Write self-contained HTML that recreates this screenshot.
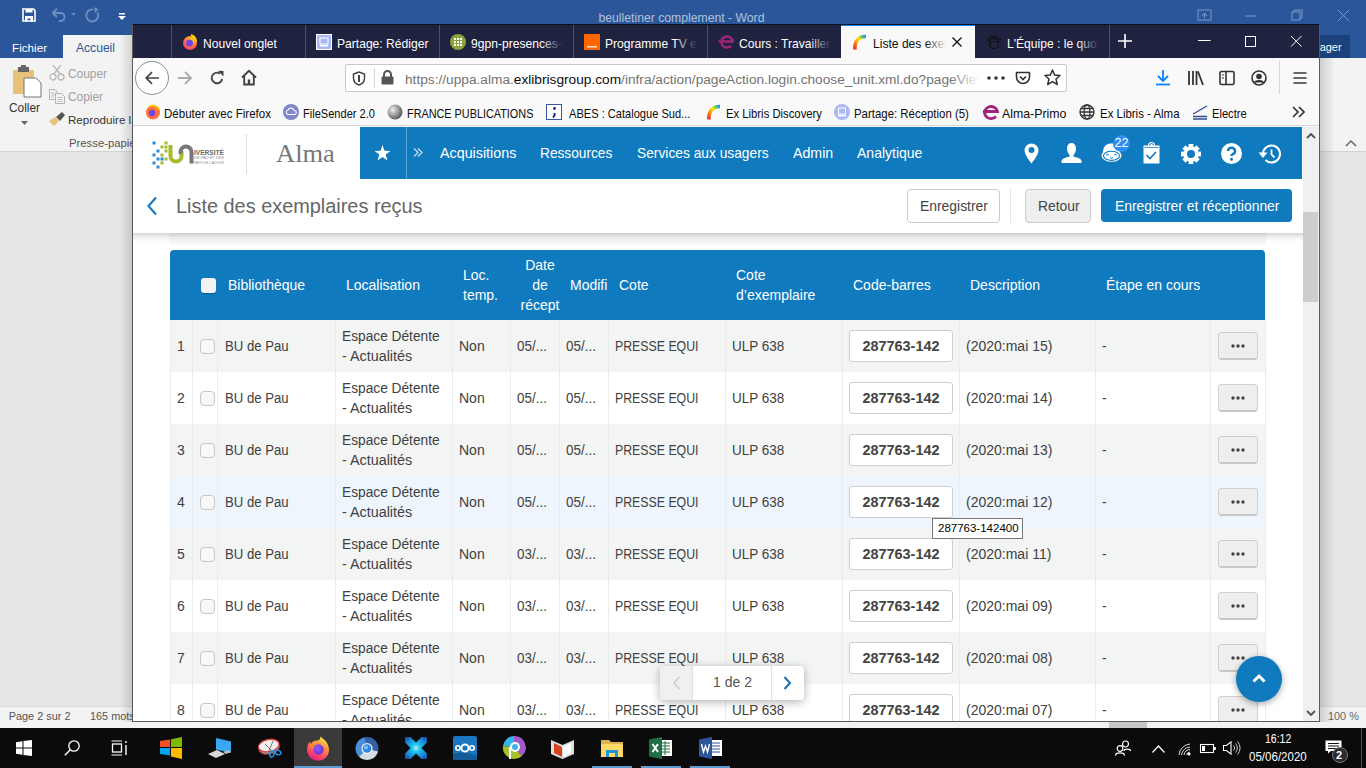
<!DOCTYPE html><html><head><meta charset="utf-8"><title>Alma</title><style>
*{margin:0;padding:0;box-sizing:border-box}
html,body{width:1366px;height:768px;overflow:hidden;background:#e6e6e6;font-family:"Liberation Sans",sans-serif;position:relative}
.a{position:absolute}
.t{position:absolute;white-space:nowrap;line-height:1}
svg{position:absolute;overflow:visible}
</style></head><body>
<div class="a" style="left:0;top:0;width:1366px;height:58px;background:#2b579a"></div>
<div class="t" style="left:598.5px;top:12px;font-size:12.21px;color:#afc0dc">beulletiner complement - Word</div>
<svg style="left:22px;top:8px" width="14" height="14" viewBox="0 0 14 14"><path d="M1 1H11.5L13 2.5V13H1Z" fill="none" stroke="#fff" stroke-width="1.6"/><rect x="3.5" y="1" width="7" height="3.5" fill="#fff"/><path d="M3 8H11V13.5H8.5V10.5H5.5V13.5H3Z" fill="#fff"/></svg>
<svg style="left:51px;top:8px" width="50" height="14" viewBox="0 0 50 14"><path d="M1.5 5L6 1M1.5 5L6 9M1.5 5H9.5A4 4 0 0 1 9.5 13H8" fill="none" stroke="#6f8fc0" stroke-width="1.8"/><path d="M20 5h5l-2.5 2.5z" fill="#6f8fc0"/><path d="M46.5 4.5A6 6 0 1 1 42 1.5" fill="none" stroke="#6f8fc0" stroke-width="1.8"/><path d="M43 -1L47.5 1.5L44 5Z" fill="#6f8fc0"/></svg>
<svg style="left:118px;top:13px" width="8" height="8" viewBox="0 0 8 8"><rect x="1" y="0" width="6" height="1.5" fill="#fff"/><path d="M0 3h8l-4 4z" fill="#fff"/></svg>
<svg style="left:1197px;top:9px" width="155" height="14" viewBox="0 0 155 14"><rect x="1" y="1" width="13" height="10" fill="none" stroke="#7d97c4"/><path d="M5 7 l2.5-3 l2.5 3 M7.5 4v5" fill="none" stroke="#7d97c4"/><path d="M48 7h11" stroke="#7d97c4"/><rect x="95" y="3" width="8" height="8" fill="none" stroke="#7d97c4"/><path d="M97 3v-2h8v8h-2" fill="none" stroke="#7d97c4"/><path d="M141 1l11 11M152 1l-11 11" stroke="#7d97c4"/></svg>
<div class="t" style="left:12px;top:42px;font-size:11.7px;color:#fff">Fichier</div>
<div class="a" style="left:63px;top:35px;width:80px;height:23px;background:#f3f3f3"></div>
<div class="t" style="left:76px;top:42px;font-size:12.1px;color:#2b579a">Accueil</div>
<div class="a" style="left:1290px;top:35px;width:60px;height:23px;background:#1b427b"></div>
<div class="t" style="left:1299.5px;top:42px;font-size:10.99px;color:#fff">Partager</div>
<div class="a" style="left:0;top:58px;width:1366px;height:94px;background:#f3f3f3;border-bottom:1px solid #d4d4d4"></div>
<svg style="left:13px;top:66px" width="30" height="32" viewBox="0 0 30 32"><rect x="0" y="4" width="21" height="24" fill="#e9c27a"/><rect x="5" y="1" width="11" height="5" fill="#666"/><rect x="8" y="-1" width="5" height="3" fill="#666"/><path d="M11 12h12l5 5v14H11z" fill="#fff" stroke="#777"/></svg>
<div class="t" style="left:9px;top:103px;font-size:11.9px;color:#333">Coller</div>
<svg style="left:21px;top:121px" width="7" height="4" viewBox="0 0 7 4"><path d="M0 0h7l-3.5 4z" fill="#666"/></svg>
<svg style="left:49px;top:65px" width="17" height="16" viewBox="0 0 17 16"><circle cx="4" cy="12" r="3" fill="none" stroke="#bbb" stroke-width="1.3"/><circle cx="12" cy="12" r="3" fill="none" stroke="#bbb" stroke-width="1.3"/><path d="M5 9L12 0M11 9L4 0" stroke="#bbb" stroke-width="1.3"/></svg>
<div class="t" style="left:68px;top:69px;font-size:11.9px;color:#a0a0a0">Couper</div>
<svg style="left:49px;top:89px" width="16" height="15" viewBox="0 0 16 15"><path d="M0.5 0.5H6L8 2.5V10.5H0.5Z" fill="#f3f3f3" stroke="#b5b5b5"/><path d="M2 4H6M2 6H6M2 8H5" stroke="#b5b5b5" stroke-width="0.8"/><path d="M6.5 4.5H12.5L15.5 7.5V14.5H6.5Z" fill="#f3f3f3" stroke="#b5b5b5"/><path d="M8.5 8.5H13.5M8.5 10.5H13.5M8.5 12.5H13.5" stroke="#b5b5b5" stroke-width="0.8"/></svg>
<div class="t" style="left:68px;top:92px;font-size:11.9px;color:#a0a0a0">Copier</div>
<svg style="left:49px;top:111px" width="17" height="16" viewBox="0 0 17 16"><path d="M0 10l6-4 4 4-5 5z" fill="#e9c27a"/><path d="M7 6l6-5 3 3-5 6z" fill="#555"/></svg>
<div class="t" style="left:68px;top:114px;font-size:11.6px;color:#333">Reproduire la</div>
<div class="t" style="left:69px;top:138px;font-size:11.3px;color:#555">Presse-papiers</div>
<div class="a" style="left:0;top:706px;width:1366px;height:22px;background:#f3f3f3;border-top:1px solid #dadada"></div>
<div class="t" style="left:8.7px;top:711px;font-size:10.9px;color:#555">Page 2 sur 2</div>
<div class="t" style="left:90px;top:711px;font-size:10.9px;color:#555">165 mots</div>
<div class="t" style="left:1328px;top:711px;font-size:10.9px;color:#666">100 %</div>
<div class="a" style="left:1109px;top:721px;width:38px;height:7px;background:#c6c6c6"></div>
<div class="a" style="left:120px;top:35px;width:12px;height:687px;background:linear-gradient(90deg,rgba(0,0,0,0),rgba(0,0,0,.13))"></div>
<svg style="left:1345px;top:140px" width="12" height="7" viewBox="0 0 12 7"><path d="M1 6l5-5 5 5" fill="none" stroke="#666" stroke-width="1.5"/></svg>
<div class="a" style="left:1319px;top:58px;width:16px;height:664px;background:linear-gradient(90deg,rgba(0,0,0,.16),rgba(0,0,0,0))"></div>
<div class="a" style="left:0;top:728px;width:1366px;height:40px;background:#0b0b0b"></div>
<div class="a" style="left:294px;top:728px;width:48px;height:40px;background:#3a3a3a"></div>
<div class="a" style="left:294px;top:766px;width:48px;height:2px;background:#5e9ccf"></div>
<div class="a" style="left:592px;top:766px;width:40px;height:2px;background:#5e9ccf"></div>
<div class="a" style="left:641px;top:766px;width:40px;height:2px;background:#5e9ccf"></div>
<div class="a" style="left:690px;top:766px;width:40px;height:2px;background:#5e9ccf"></div>
<svg style="left:16px;top:740px" width="16" height="16" viewBox="0 0 16 16"><path d="M0 2.2L6.5 1.3V7.5H0ZM7.5 1.1L16 0V7.5H7.5ZM0 8.5H6.5V14.7L0 13.8ZM7.5 8.5H16V16L7.5 14.9Z" fill="#fff"/></svg>
<svg style="left:64px;top:740px" width="16" height="16" viewBox="0 0 16 16"><circle cx="10" cy="6" r="5.2" fill="none" stroke="#fff" stroke-width="1.3"/><path d="M6.3 9.7L0.8 15.2" stroke="#fff" stroke-width="1.4"/></svg>
<svg style="left:111px;top:740px" width="17" height="16" viewBox="0 0 17 16"><path d="M0.5 1H11M0.5 15H11" stroke="#fff" stroke-width="1.2"/><rect x="1.5" y="4" width="9" height="8" fill="none" stroke="#fff" stroke-width="1.3"/><path d="M15 1V3M15 5V15" stroke="#fff" stroke-width="1.4"/></svg>
<svg style="left:160px;top:737px" width="23" height="22" viewBox="0 0 23 22"><path d="M0 4L10 2.5V10H0Z" fill="#f25022"/><path d="M11 2.3L22 0V10H11Z" fill="#7fba00"/><path d="M0 11H10V18.5L0 17Z" fill="#00a4ef"/><path d="M11 11H22V22L11 19.5Z" fill="#ffb900"/></svg>
<svg style="left:208px;top:737px" width="24" height="22" viewBox="0 0 24 22"><path d="M8 1L23 4.5V16L8 12.5Z" fill="#3aa8f0"/><path d="M0 17L9 13L17 17L8 21Z" fill="#d8d8d8"/><path d="M15 15L20 13L23 15L18 17Z" fill="#bbb"/></svg>
<svg style="left:257px;top:737px" width="25" height="21" viewBox="0 0 25 21"><g transform="rotate(-12 12 10)"><ellipse cx="12" cy="11" rx="10.5" ry="6" fill="#9a9a9a" stroke="#b03030" stroke-width="1"/><ellipse cx="12" cy="8.5" rx="10.5" ry="6" fill="#f0f0f0" stroke="#d83a3a" stroke-width="1.3"/></g><path d="M8 7L15 14M16 4L12 14" stroke="#777" stroke-width="1"/><ellipse cx="15" cy="17" rx="2" ry="3.2" fill="none" stroke="#1e90e0" stroke-width="1.6" transform="rotate(20 15 17)"/><ellipse cx="21" cy="15.5" rx="3" ry="2" fill="none" stroke="#1e90e0" stroke-width="1.6" transform="rotate(20 21 15.5)"/></svg>
<svg style="left:306px;top:736px" width="24" height="24" viewBox="0 0 24 24"><defs><linearGradient id="tff" x1="0.8" y1="0" x2="0.3" y2="1"><stop offset="0" stop-color="#fff44f"/><stop offset="0.35" stop-color="#ff9a3c"/><stop offset="0.7" stop-color="#ff4f5e"/><stop offset="1" stop-color="#e31587"/></linearGradient><radialGradient id="tfp" cx="0.4" cy="0.4" r="0.7"><stop offset="0" stop-color="#9059ff"/><stop offset="1" stop-color="#6b2fd6"/></radialGradient></defs><path d="M14.5 0.5C17 3 19 3.5 21 7C23 10.5 23 13 23 14.5A11 11 0 1 1 1.5 10.5C2 8 3 6.5 4 5.5L4.5 8C6 5.5 8.5 4.5 11 4.5C13 4.5 14.5 3 14.5 0.5Z" fill="url(#tff)"/><circle cx="12.5" cy="13.5" r="5.2" fill="url(#tfp)"/><path d="M3.5 11C5 8.5 8 7.5 11 8.5C8.5 9.5 7.5 11 7.5 13C6 12 4.5 11.5 3.5 11Z" fill="#ff8a2a"/></svg>
<svg style="left:355px;top:737px" width="24" height="23" viewBox="0 0 24 23"><path d="M12 11.5L10.00 0.17A11.5 11.5 0 0 1 23.11 14.48Z" fill="#3560a8"/><path d="M12 11.5L23.11 14.48A11.5 11.5 0 0 1 3.87 19.63Z" fill="#d5dbe3"/><path d="M12 11.5L3.87 19.63A11.5 11.5 0 0 1 10.00 0.17Z" fill="#4a8fdc"/><circle cx="12" cy="11.5" r="5.6" fill="#e8eef5"/><circle cx="12" cy="11.5" r="4.3" fill="#2d86de"/><circle cx="11" cy="10.5" r="2" fill="#7cc0f5"/></svg>
<svg style="left:405px;top:737px" width="22" height="22" viewBox="0 0 22 22"><defs><radialGradient id="xg" cx="0.5" cy="0.5" r="0.7"><stop offset="0" stop-color="#bff3ff"/><stop offset="0.25" stop-color="#1ec8ee"/><stop offset="0.6" stop-color="#1a8fd8"/><stop offset="1" stop-color="#1f3f9c"/></radialGradient></defs><path d="M0 0H5.5L11 5.5L16.5 0H22V5.5L16.5 11L22 16.5V22H16.5L11 16.5L5.5 22H0V16.5L5.5 11L0 5.5Z" fill="url(#xg)"/></svg>
<svg style="left:453px;top:736px" width="24" height="24" viewBox="0 0 24 24"><rect width="24" height="24" rx="2" fill="#1a76c0"/><path d="M0 18Q12 14 24 20V24H0Z" fill="#135a96"/><circle cx="12" cy="12" r="3.6" fill="none" stroke="#fff" stroke-width="2"/><circle cx="5" cy="12" r="2.2" fill="none" stroke="#fff" stroke-width="1.6"/><circle cx="19" cy="12" r="2.2" fill="none" stroke="#fff" stroke-width="1.6"/></svg>
<svg style="left:502px;top:736px" width="24" height="23" viewBox="0 0 24 23"><path d="M12 0A11.5 11.5 0 0 1 20 20L12 11.5Z" fill="#a35bc9"/><path d="M12 0A11.5 11.5 0 0 0 1 10L12 11.5Z" fill="#38b6ec"/><path d="M1 10A11.5 11.5 0 0 0 20 20L12 11.5Z" fill="#a8c02a"/><circle cx="13" cy="11" r="5" fill="#fff"/><circle cx="13" cy="11" r="3" fill="#38b6ec"/><path d="M8 11V23" stroke="#fff" stroke-width="2"/></svg>
<svg style="left:551px;top:736px" width="23" height="23" viewBox="0 0 23 23"><path d="M0 4L11.5 9L23 4V18L11.5 23L0 18Z" fill="#e0e0e0"/><path d="M3 7L11 11V21L3 17Z" fill="#d9421e"/><path d="M12 11L20 7V17L12 21Z" fill="#fff"/></svg>
<svg style="left:601px;top:738px" width="22" height="19" viewBox="0 0 22 19"><path d="M0 2H8L10 4H22V19H0Z" fill="#dcb24e"/><path d="M0 6H22V19H0Z" fill="#ffd867"/><path d="M5 19V12H17V19H14V15H8V19Z" fill="#1a95e0"/></svg>
<svg style="left:649px;top:737px" width="23" height="22" viewBox="0 0 23 22"><rect x="9" y="3" width="14" height="16" fill="#fff"/><path d="M11 6H21M11 9H21M11 12H21M11 15H21M16 4V18" stroke="#1d6b3c" stroke-width="1"/><path d="M0 2.5L13 0V22L0 19.5Z" fill="#1e7145"/><path d="M3.5 7L9 15M9 7L3.5 15" stroke="#fff" stroke-width="2"/></svg>
<svg style="left:699px;top:737px" width="23" height="22" viewBox="0 0 23 22"><rect x="9" y="3" width="14" height="16" fill="#fff"/><path d="M12 6H21M12 9H21M12 12H21M12 15H21" stroke="#2b579a" stroke-width="1.2"/><path d="M0 2.5L13 0V22L0 19.5Z" fill="#2b579a"/><path d="M2.5 7L4.5 15L6.5 9L8.5 15L10.5 7" fill="none" stroke="#fff" stroke-width="1.4"/></svg>
<svg style="left:1115px;top:740px" width="16" height="16" viewBox="0 0 16 16"><circle cx="10.5" cy="4" r="3" fill="none" stroke="#fff" stroke-width="1.2"/><circle cx="5" cy="8.5" r="2.8" fill="none" stroke="#fff" stroke-width="1.2"/><path d="M0.5 15.5C0.5 12 9.5 12 9.5 15.5M9 11C9 8.5 15.5 8.5 15.5 11" fill="none" stroke="#fff" stroke-width="1.2"/></svg>
<svg style="left:1152px;top:745px" width="13" height="8" viewBox="0 0 13 8"><path d="M0.5 7.5L6.5 1L12.5 7.5" fill="none" stroke="#fff" stroke-width="1.3"/></svg>
<svg style="left:1178px;top:742px" width="13" height="14" viewBox="0 0 13 14"><path d="M1 13A12 12 0 0 1 12 2M3.5 13A9 9 0 0 1 12 5M6 13A6.5 6.5 0 0 1 12 7.5M8.5 13A4 4 0 0 1 12 10" fill="none" stroke="#ddd" stroke-width="1"/><circle cx="11" cy="12" r="1.5" fill="#fff"/></svg>
<svg style="left:1200px;top:744px" width="16" height="9" viewBox="0 0 16 9"><rect x="0.5" y="0.5" width="13" height="8" fill="none" stroke="#fff" stroke-width="1.1"/><rect x="2" y="2" width="3" height="5" fill="#fff"/><rect x="14" y="3" width="1.8" height="3" fill="#fff"/></svg>
<svg style="left:1223px;top:741px" width="17" height="14" viewBox="0 0 17 14"><path d="M0.5 4.5H3.5L8 0.8V13.2L3.5 9.5H0.5Z" fill="none" stroke="#fff" stroke-width="1.1"/><path d="M10.5 4.5A3.5 3.5 0 0 1 10.5 9.5M12.5 2.5A6.5 6.5 0 0 1 12.5 11.5M14.5 0.5A9.5 9.5 0 0 1 14.5 13.5" fill="none" stroke="#ccc" stroke-width="1"/></svg>
<div class="t" style="left:1264.6px;top:733px;font-size:12px;color:#fff;transform:scaleX(0.873);transform-origin:0 0;">16:12</div>
<div class="t" style="left:1249px;top:751px;font-size:12px;color:#fff;transform:scaleX(0.962);transform-origin:0 0;">05/06/2020</div>
<svg style="left:1325px;top:740px" width="17" height="14" viewBox="0 0 17 14"><path d="M0.5 0.5H16.5V11H6L3 13.5V11H0.5Z" fill="#fff"/><path d="M3 3.5H14M3 6H14M3 8.5H14" stroke="#111" stroke-width="1"/></svg>
<div class="a" style="left:1332px;top:747px;width:16px;height:16px;border-radius:50%;background:#2a2a2a;border:1px solid #777"></div>
<div class="t" style="left:1336px;top:750px;font-size:11px;font-weight:bold;color:#fff">2</div>
<div class="a" style="left:1361px;top:728px;width:1px;height:40px;background:#555"></div>
<div class="a" style="left:132px;top:24px;width:1188px;height:698px;background:#f9f9fa;border:1px solid #5a5a5a;border-top-color:#12121e;overflow:hidden">
<div class="a" id="ffin" style="left:-133px;top:-25px;width:1366px;height:768px">
<div class="a" style="left:133px;top:25px;width:1186px;height:33px;background:#202340"></div>
<div class="a" style="left:171px;top:25px;width:1px;height:33px;background:#4d4f6e"></div>
<div class="a" style="left:305px;top:25px;width:1px;height:33px;background:#4d4f6e"></div>
<div class="a" style="left:439px;top:25px;width:1px;height:33px;background:#4d4f6e"></div>
<div class="a" style="left:573px;top:25px;width:1px;height:33px;background:#4d4f6e"></div>
<div class="a" style="left:707px;top:25px;width:1px;height:33px;background:#4d4f6e"></div>
<div class="a" style="left:1109px;top:25px;width:1px;height:33px;background:#4d4f6e"></div>
<svg style="left:182px;top:34px" width="16" height="16" viewBox="0 0 16 16"><defs><radialGradient id="gff" cx="0.6" cy="0.3" r="0.9"><stop offset="0" stop-color="#ffe226"/><stop offset="0.5" stop-color="#ff7139"/><stop offset="1" stop-color="#e31587"/></radialGradient></defs><circle cx="8" cy="9" r="7" fill="url(#gff)"/><circle cx="7.5" cy="9" r="3.5" fill="#7542e5"/><path d="M9 1c3 1 5 4 5 7" stroke="#ffd000" stroke-width="2" fill="none"/></svg>
<div class="a" style="left:203px;top:33px;width:92px;height:20px;overflow:hidden"><div class="t" style="left:0;top:3.5px;line-height:1.2;font-size:12.6px;color:#fff;transform:scaleX(0.96);transform-origin:0 0">Nouvel onglet</div></div>
<svg style="left:316px;top:34px" width="16" height="16" viewBox="0 0 16 16"><rect width="16" height="16" fill="#fff"/><rect x="1" y="1" width="14" height="14" rx="1" fill="#a6b8f5"/><rect x="4" y="4" width="8" height="6" fill="none" stroke="#fff"/><rect x="4" y="11" width="8" height="1.5" fill="#fff"/></svg>
<div class="a" style="left:337px;top:33px;width:92px;height:20px;overflow:hidden"><div class="t" style="left:0;top:3.5px;line-height:1.2;font-size:12.6px;color:#fff;transform:scaleX(0.96);transform-origin:0 0">Partage: Rédiger</div></div>
<svg style="left:450px;top:34px" width="16" height="16" viewBox="0 0 16 16"><circle cx="8" cy="8" r="8" fill="#8aa33a"/><g fill="#fff"><rect x="4" y="4" width="2" height="2"/><rect x="7" y="4" width="2" height="2"/><rect x="10" y="4" width="2" height="2"/><rect x="4" y="7" width="2" height="2"/><rect x="7" y="7" width="2" height="2"/><rect x="10" y="7" width="2" height="2"/><rect x="4" y="10" width="2" height="2"/><rect x="7" y="10" width="2" height="2"/><rect x="10" y="10" width="2" height="2"/></g></svg>
<div class="a" style="left:471px;top:33px;width:92px;height:20px;overflow:hidden"><div class="t" style="left:0;top:3.5px;line-height:1.2;font-size:12.6px;color:#fff;transform:scaleX(0.96);transform-origin:0 0">9gpn-presences-c</div></div>
<div class="a" style="left:541px;top:30px;width:22px;height:22px;background:linear-gradient(90deg,rgba(0,0,0,0),#202340)"></div>
<svg style="left:584px;top:34px" width="16" height="16" viewBox="0 0 16 16"><rect width="16" height="16" fill="#ff6600"/><rect x="3" y="12" width="10" height="1.5" fill="#fff" opacity="0.8"/></svg>
<div class="a" style="left:605px;top:33px;width:92px;height:20px;overflow:hidden"><div class="t" style="left:0;top:3.5px;line-height:1.2;font-size:12.6px;color:#fff;transform:scaleX(0.96);transform-origin:0 0">Programme TV et</div></div>
<div class="a" style="left:675px;top:30px;width:22px;height:22px;background:linear-gradient(90deg,rgba(0,0,0,0),#202340)"></div>
<svg style="left:718px;top:33px" width="18" height="18" viewBox="0 0 18 18"><path d="M0.5 8.5H14.8A5.8 5.5 0 1 0 13 13" fill="none" stroke="#a0237a" stroke-width="2.4"/></svg>
<div class="a" style="left:739px;top:33px;width:92px;height:20px;overflow:hidden"><div class="t" style="left:0;top:3.5px;line-height:1.2;font-size:12.6px;color:#fff;transform:scaleX(0.96);transform-origin:0 0">Cours : Travailler à</div></div>
<div class="a" style="left:809px;top:30px;width:22px;height:22px;background:linear-gradient(90deg,rgba(0,0,0,0),#202340)"></div>
<div class="a" style="left:841px;top:24px;width:134px;height:34px;background:#f9f9fa"></div>
<div class="a" style="left:841px;top:24px;width:134px;height:2px;background:#0a84ff"></div>
<svg style="left:852px;top:34px" width="16" height="16" viewBox="0 0 16 16"><defs><linearGradient id="garc" x1="0" y1="1" x2="1" y2="0"><stop offset="0" stop-color="#e8213a"/><stop offset="0.35" stop-color="#ff9c00"/><stop offset="0.6" stop-color="#ffe600"/><stop offset="0.8" stop-color="#5bc95b"/><stop offset="1" stop-color="#1e90ff"/></linearGradient></defs><path d="M3 15.5 C2.5 8 6 2.5 14 2.5" fill="none" stroke="url(#garc)" stroke-width="3.6"/></svg>
<div class="a" style="left:873px;top:33px;width:74px;height:20px;overflow:hidden"><div class="t" style="left:0;top:3.5px;line-height:1.2;font-size:12.6px;color:#0c0c0d;transform:scaleX(0.96);transform-origin:0 0">Liste des exemplaires</div></div>
<div class="a" style="left:925px;top:30px;width:22px;height:22px;background:linear-gradient(90deg,rgba(0,0,0,0),#f9f9fa)"></div>
<svg style="left:952px;top:37px" width="10" height="10" viewBox="0 0 10 10"><path d="M0.5 0.5L9.5 9.5M9.5 0.5L0.5 9.5" stroke="#0c0c0d" stroke-width="1.3"/></svg>
<svg style="left:986px;top:34px" width="16" height="16" viewBox="0 0 16 16"><g fill="none" stroke="#111" stroke-width="1.2"><ellipse cx="8" cy="11" rx="4.5" ry="3.5"/><circle cx="3" cy="6" r="1.5"/><circle cx="6" cy="3.5" r="1.5"/><circle cx="10" cy="3.5" r="1.5"/><circle cx="13" cy="6" r="1.5"/></g></svg>
<div class="a" style="left:1007px;top:33px;width:92px;height:20px;overflow:hidden"><div class="t" style="left:0;top:3.5px;line-height:1.2;font-size:12.6px;color:#fff;transform:scaleX(0.96);transform-origin:0 0">L'Équipe : le quotidien</div></div>
<div class="a" style="left:1077px;top:30px;width:22px;height:22px;background:linear-gradient(90deg,rgba(0,0,0,0),#202340)"></div>
<svg style="left:1118px;top:34px" width="14" height="14" viewBox="0 0 14 14"><path d="M7 0V14M0 7H14" stroke="#fff" stroke-width="1.6"/></svg>
<svg style="left:1198px;top:35px" width="110" height="14" viewBox="0 0 110 14"><path d="M0 5.5H12.5" stroke="#fff" stroke-width="1"/><rect x="47.5" y="1.5" width="10" height="10" fill="none" stroke="#fff" stroke-width="1"/><path d="M93 1L103.5 11.5M103.5 1L93 11.5" stroke="#fff" stroke-width="1"/></svg>
<div class="a" style="left:133px;top:58px;width:1186px;height:68px;background:#f9f9fa;border-bottom:1px solid #d7d7db"></div>
<div class="a" style="left:135px;top:61px;width:34px;height:34px;border-radius:50%;border:1px solid #8f8f9d;background:#fff"></div>
<svg style="left:144px;top:70px" width="16" height="16" viewBox="0 0 16 16"><path d="M15 8H2.2M8 2.2L2.2 8L8 13.8" fill="none" stroke="#444" stroke-width="1.7"/></svg>
<svg style="left:177px;top:70px" width="16" height="16" viewBox="0 0 16 16"><path d="M1 8H14M8 2L14 8L8 14" fill="none" stroke="#aaa" stroke-width="1.8"/></svg>
<svg style="left:209px;top:70px" width="16" height="16" viewBox="0 0 16 16"><path d="M13.2 9A5.3 5.3 0 1 1 11 3.6" fill="none" stroke="#444" stroke-width="1.9"/><path d="M9 0.8L14.5 1V6.5Z" fill="#444"/></svg>
<svg style="left:241px;top:69px" width="16" height="17" viewBox="0 0 16 17"><path d="M1 8.5L8 1.8L15 8.5" fill="none" stroke="#444" stroke-width="1.9" stroke-linejoin="round"/><path d="M3.2 7V15.5H12.8V7" fill="none" stroke="#444" stroke-width="1.9"/><rect x="6.8" y="10.5" width="2.4" height="5" fill="#444"/></svg>
<div class="a" style="left:345px;top:64px;width:722px;height:28px;background:#fff;border:1px solid #c9c9cc;border-radius:2px"></div>
<svg style="left:352px;top:71px" width="14" height="15" viewBox="0 0 14 15"><path d="M7 1L1.5 3V7C1.5 10.5 4 13 7 14C10 13 12.5 10.5 12.5 7V3Z" fill="none" stroke="#444" stroke-width="1.5"/><path d="M7 4V11" stroke="#444" stroke-width="2"/></svg>
<div class="a" style="left:374px;top:68px;width:1px;height:20px;background:#d7d7db"></div>
<svg style="left:381px;top:70px" width="13" height="15" viewBox="0 0 13 15"><path d="M3 7V4.5A3.5 3.5 0 0 1 10 4.5V7" fill="none" stroke="#555" stroke-width="2"/><rect x="0.5" y="6.5" width="12" height="8" rx="1" fill="#555"/></svg>
<div class="t" style="left:405px;top:70.5px;width:573px;overflow:hidden;line-height:1.3;font-size:13.7px;color:#737373">https://uppa.alma.<span style="color:#0c0c0d">exlibrisgroup.com</span>/infra/action/pageAction.login.choose_unit.xml.do?pageViewMode=Edit</div>
<div class="a" style="left:950px;top:66px;width:30px;height:24px;background:linear-gradient(90deg,rgba(255,255,255,0),#fff)"></div>
<svg style="left:987px;top:76px" width="18" height="4" viewBox="0 0 18 4"><circle cx="2" cy="2" r="1.8" fill="#333"/><circle cx="9" cy="2" r="1.8" fill="#333"/><circle cx="16" cy="2" r="1.8" fill="#333"/></svg>
<svg style="left:1015px;top:70px" width="16" height="16" viewBox="0 0 16 16"><path d="M1.5 2.5H14.5V7A6.5 6.5 0 0 1 1.5 7Z" fill="none" stroke="#333" stroke-width="1.6" stroke-linejoin="round"/><path d="M5 6.5L8 9.5L11 6.5" fill="none" stroke="#333" stroke-width="1.6"/></svg>
<svg style="left:1044px;top:69px" width="17" height="17" viewBox="0 0 17 17"><path d="M8.5 1L10.7 6.1L16 6.5L12 10L13.3 15.5L8.5 12.6L3.7 15.5L5 10L1 6.5L6.3 6.1Z" fill="none" stroke="#333" stroke-width="1.5" stroke-linejoin="round"/></svg>
<svg style="left:1155px;top:69px" width="16" height="17" viewBox="0 0 16 17"><path d="M8 1V12M3 7L8 12L13 7" fill="none" stroke="#0a84ff" stroke-width="1.8"/><path d="M1 15.5H15" stroke="#0a84ff" stroke-width="1.8"/></svg>
<svg style="left:1187px;top:70px" width="17" height="16" viewBox="0 0 17 16"><path d="M2 1V15M6 1V15M9.5 1V15M11 1.5L16 15" stroke="#333" stroke-width="1.8"/></svg>
<svg style="left:1219px;top:70px" width="16" height="16" viewBox="0 0 16 16"><rect x="1" y="1.5" width="14" height="13" rx="1.5" fill="none" stroke="#333" stroke-width="1.6"/><path d="M7 2V14" stroke="#333" stroke-width="1.6"/><path d="M3 5H5M3 8H5" stroke="#333" stroke-width="1.2"/></svg>
<svg style="left:1251px;top:70px" width="16" height="16" viewBox="0 0 16 16"><circle cx="8" cy="8" r="7" fill="none" stroke="#333" stroke-width="1.6"/><circle cx="8" cy="6.5" r="2.8" fill="#333"/><path d="M3.5 12.5C5 10 11 10 12.5 12.5" fill="#333" stroke="#333" stroke-width="1.5"/></svg>
<div class="a" style="left:1279px;top:61px;width:1px;height:33px;background:#d7d7db"></div>
<svg style="left:1293px;top:71px" width="14" height="14" viewBox="0 0 14 14"><path d="M0.5 2H13.5M0.5 7H13.5M0.5 12H13.5" stroke="#3a3a3a" stroke-width="1.7"/></svg>
<svg style="left:145px;top:104px" width="16" height="16" viewBox="0 0 16 16"><circle cx="8" cy="8.5" r="7" fill="#ff7139"/><circle cx="7" cy="9" r="3.3" fill="#7542e5"/><path d="M4 3c2-2 8-2 10 3" stroke="#ffbd00" stroke-width="2" fill="none"/></svg>
<div class="t" style="left:164px;top:107.5px;font-size:12.2px;color:#0c0c0d;transform:scaleX(0.945);transform-origin:0 0;">Débuter avec Firefox</div>
<svg style="left:283px;top:104px" width="16" height="16" viewBox="0 0 16 16"><circle cx="8" cy="8" r="8" fill="#7f86c9"/><path d="M4.5 10.5A2.5 2.5 0 0 1 5 6A3.2 3.2 0 0 1 11 6.5A2 2 0 0 1 11.5 10.5Z" fill="none" stroke="#fff" stroke-width="1.1"/></svg>
<div class="t" style="left:303px;top:107.5px;font-size:12.2px;color:#0c0c0d;transform:scaleX(0.907);transform-origin:0 0;">FileSender 2.0</div>
<svg style="left:387px;top:104px" width="16" height="16" viewBox="0 0 16 16"><defs><radialGradient id="gg" cx="0.35" cy="0.35" r="0.7"><stop offset="0" stop-color="#eee"/><stop offset="1" stop-color="#555"/></radialGradient></defs><circle cx="8" cy="8" r="7.5" fill="url(#gg)"/></svg>
<div class="t" style="left:407px;top:107.5px;font-size:12.2px;color:#0c0c0d;transform:scaleX(0.890);transform-origin:0 0;">FRANCE PUBLICATIONS</div>
<svg style="left:546px;top:104px" width="16" height="16" viewBox="0 0 16 16"><rect x="0.5" y="0.5" width="15" height="15" fill="#fff" stroke="#3a57a7"/><circle cx="8.5" cy="4.5" r="1.4" fill="#1d2d7a"/><path d="M8.5 9V11.5L7 13.5" stroke="#1d2d7a" stroke-width="2" fill="none"/></svg>
<div class="t" style="left:569px;top:107.5px;font-size:12.2px;color:#0c0c0d;transform:scaleX(0.909);transform-origin:0 0;">ABES : Catalogue Sud...</div>
<svg style="left:706px;top:104px" width="16" height="16" viewBox="0 0 16 16"><defs><linearGradient id="garc2" x1="0" y1="1" x2="1" y2="0"><stop offset="0" stop-color="#e8213a"/><stop offset="0.35" stop-color="#ff9c00"/><stop offset="0.6" stop-color="#ffe600"/><stop offset="0.8" stop-color="#5bc95b"/><stop offset="1" stop-color="#1e90ff"/></linearGradient></defs><path d="M3 15.5 C2.5 8 6 2.5 14 2.5" fill="none" stroke="url(#garc2)" stroke-width="3.6"/></svg>
<div class="t" style="left:726px;top:107.5px;font-size:12.2px;color:#0c0c0d;transform:scaleX(0.926);transform-origin:0 0;">Ex Libris Discovery</div>
<svg style="left:834px;top:104px" width="16" height="16" viewBox="0 0 16 16"><circle cx="8" cy="8" r="8" fill="#a9b9f3"/><rect x="4.5" y="4" width="7" height="6" fill="none" stroke="#fff"/><rect x="4" y="11" width="8" height="1.5" fill="#fff"/></svg>
<div class="t" style="left:854px;top:107.5px;font-size:12.2px;color:#0c0c0d;transform:scaleX(0.937);transform-origin:0 0;">Partage: Réception (5)</div>
<svg style="left:982px;top:104px" width="18" height="16" viewBox="0 0 18 16"><path d="M1 7.5 H15.5 A6.5 6 0 1 0 14 12.5" fill="none" stroke="#a0237a" stroke-width="2.8"/></svg>
<div class="t" style="left:1002px;top:107.5px;font-size:12.2px;color:#0c0c0d;transform:scaleX(1.012);transform-origin:0 0;">Alma-Primo</div>
<svg style="left:1079px;top:104px" width="16" height="16" viewBox="0 0 16 16"><g fill="none" stroke="#333" stroke-width="1.3"><circle cx="8" cy="8" r="7"/><ellipse cx="8" cy="8" rx="3" ry="7"/><path d="M1 8H15M2 4.5H14M2 11.5H14"/></g></svg>
<div class="t" style="left:1099.5px;top:107.5px;font-size:12.2px;color:#0c0c0d;transform:scaleX(0.939);transform-origin:0 0;">Ex Libris - Alma</div>
<svg style="left:1192px;top:104px" width="16" height="16" viewBox="0 0 16 16"><path d="M1 10L15 2M1 12.5H15M1 15H15" stroke="#334d8c" stroke-width="1.4" fill="none"/></svg>
<div class="t" style="left:1212px;top:107.5px;font-size:12.2px;color:#0c0c0d;transform:scaleX(0.914);transform-origin:0 0;">Electre</div>
<svg style="left:1292px;top:106px" width="14" height="12" viewBox="0 0 14 12"><path d="M1 1L6 6L1 11M7 1L12 6L7 11" fill="none" stroke="#333" stroke-width="1.7"/></svg>
<div class="a" style="left:133px;top:127px;width:1186px;height:595px;background:#fff"></div>
<div class="a" style="left:360px;top:127px;width:942px;height:52px;background:#0f7abd"></div>
<div class="a" style="left:406px;top:127px;width:1px;height:52px;background:#5aa3d6"></div>
<svg style="left:150px;top:139px" width="80" height="32" viewBox="150 139 80 32"><rect x="152.5" y="141.5" width="3" height="3" fill="#2a8ad4"/><rect x="164.5" y="141.5" width="3" height="3" fill="#a8b92a"/><rect x="160.5" y="145.5" width="3" height="3" fill="#a8b92a"/><rect x="164.5" y="145.5" width="3" height="3" fill="#a8b92a"/><rect x="156.5" y="149.5" width="3" height="3" fill="#2a8ad4"/><rect x="164.5" y="149.5" width="3" height="3" fill="#a8b92a"/><rect x="152.5" y="153.5" width="3" height="3" fill="#2a8ad4"/><rect x="160.5" y="153.5" width="3" height="3" fill="#a8b92a"/><rect x="156.5" y="157.5" width="3" height="3" fill="#2a8ad4"/><rect x="160.5" y="157.5" width="3" height="3" fill="#2a8ad4"/><rect x="164.5" y="157.5" width="3" height="3" fill="#a8b92a"/><rect x="152.5" y="161.5" width="3" height="3" fill="#2a8ad4"/><rect x="160.5" y="161.5" width="3" height="3" fill="#a8b92a"/><rect x="156.5" y="165.5" width="3" height="3" fill="#2a8ad4"/><path d="M170.5 145V156A5.5 5.5 0 0 0 181.5 156V151" fill="none" stroke="#a8b92a" stroke-width="4"/><path d="M180.5 154V152A5.5 5.5 0 0 1 191.5 152V163.5" fill="none" stroke="#777" stroke-width="4"/><text x="194" y="154.8" font-size="7.3" font-weight="bold" fill="#6a6a6a" font-family="Liberation Sans" textLength="30" lengthAdjust="spacingAndGlyphs">IVERSITÉ</text><text x="194" y="159.3" font-size="3.6" fill="#8a8a8a" font-family="Liberation Sans" textLength="30" lengthAdjust="spacingAndGlyphs">DE PAU ET DES</text><text x="194" y="163.6" font-size="3.6" fill="#8a8a8a" font-family="Liberation Sans" textLength="30" lengthAdjust="spacingAndGlyphs">PAYS DE L'ADOUR</text></svg>
<div class="a" style="left:246px;top:134px;width:1px;height:40px;background:#ddd"></div>
<div class="t" style="left:276px;top:141px;font-family:'Liberation Serif',serif;font-size:25px;color:#777;transform:scaleX(1.06);transform-origin:0 0">Alma</div>
<svg style="left:374px;top:145px" width="17" height="16" viewBox="0 0 17 16"><path d="M8.5 0L10.5 5.8L16.5 5.9L11.7 9.6L13.4 15.5L8.5 12L3.6 15.5L5.3 9.6L0.5 5.9L6.5 5.8Z" fill="#fff"/></svg>
<svg style="left:413px;top:148px" width="10" height="9" viewBox="0 0 10 9"><path d="M1 0.5L5 4.5L1 8.5M5 0.5L9 4.5L5 8.5" fill="none" stroke="#cfe3f3" stroke-width="1.2"/></svg>
<div class="t" style="left:439.5px;top:146px;font-size:14.4px;color:#fff;transform:scaleX(0.994);transform-origin:0 0;">Acquisitions</div>
<div class="t" style="left:540.2px;top:146px;font-size:14.4px;color:#fff;transform:scaleX(0.952);transform-origin:0 0;">Ressources</div>
<div class="t" style="left:637px;top:146px;font-size:14.4px;color:#fff;transform:scaleX(0.957);transform-origin:0 0;">Services aux usagers</div>
<div class="t" style="left:792.7px;top:146px;font-size:14.4px;color:#fff;transform:scaleX(0.987);transform-origin:0 0;">Admin</div>
<div class="t" style="left:857px;top:146px;font-size:14.4px;color:#fff;transform:scaleX(0.973);transform-origin:0 0;">Analytique</div>
<svg style="left:1024px;top:143px" width="15" height="21" viewBox="0 0 15 21"><path d="M7.5 0.5A7 7 0 0 0 0.5 7.5C0.5 12 7.5 20.5 7.5 20.5C7.5 20.5 14.5 12 14.5 7.5A7 7 0 0 0 7.5 0.5Z" fill="#fff"/><circle cx="7.5" cy="7" r="3" fill="#0f7abd"/></svg>
<svg style="left:1061px;top:143px" width="21" height="20" viewBox="0 0 21 20"><path d="M10.5 0C7.5 0 6 2.5 6 5.5C6 8.5 7.5 11 8.5 12V13.5C5 14.5 0.5 15.5 0.5 18V20H20.5V18C20.5 15.5 16 14.5 12.5 13.5V12C13.5 11 15 8.5 15 5.5C15 2.5 13.5 0 10.5 0Z" fill="#fff"/></svg>
<svg style="left:1101px;top:143px" width="21" height="19" viewBox="0 0 21 19"><path d="M2 9C2 3 6 0.5 10.5 0.5C15 0.5 19 3 19 9Z" fill="#fff"/><ellipse cx="10.5" cy="12.5" rx="10" ry="6.3" fill="#fff"/><ellipse cx="10.5" cy="12.8" rx="8" ry="4.6" fill="none" stroke="#0f7abd" stroke-width="1.1"/><path d="M5 12Q6.5 10.5 8 12M13 12Q14.5 10.5 16 12" fill="none" stroke="#0f7abd" stroke-width="1"/><path d="M9 14.5Q10.5 16 12 14.5" fill="none" stroke="#0f7abd" stroke-width="1"/></svg>
<div class="a" style="left:1113px;top:135px;width:17px;height:17px;border-radius:50%;background:#2b8ef0"></div>
<div class="t" style="left:1114.5px;top:137px;font-size:12.5px;color:#fff">22</div>
<svg style="left:1143px;top:142px" width="17" height="22" viewBox="0 0 17 22"><path d="M0.5 3.5H5A3.5 3.5 0 0 1 12 3.5H16.5V21.5H0.5Z" fill="#fff"/><path d="M6.5 3.5A2 2 0 0 1 10.5 3.5" fill="none" stroke="#0f7abd" stroke-width="1"/><path d="M1.5 5.5H15.5" stroke="#0f7abd" stroke-width="0.8"/><path d="M3.5 13L7 16.5L13 10" fill="none" stroke="#0f7abd" stroke-width="1.6"/></svg>
<svg style="left:1181px;top:144px" width="20" height="20" viewBox="0 0 20 20"><g fill="#fff"><circle cx="10" cy="10" r="7.6"/><rect x="7.6" y="0" width="4.8" height="4" transform="rotate(0 10 10)"/><rect x="7.6" y="0" width="4.8" height="4" transform="rotate(45 10 10)"/><rect x="7.6" y="0" width="4.8" height="4" transform="rotate(90 10 10)"/><rect x="7.6" y="0" width="4.8" height="4" transform="rotate(135 10 10)"/><rect x="7.6" y="0" width="4.8" height="4" transform="rotate(180 10 10)"/><rect x="7.6" y="0" width="4.8" height="4" transform="rotate(225 10 10)"/><rect x="7.6" y="0" width="4.8" height="4" transform="rotate(270 10 10)"/><rect x="7.6" y="0" width="4.8" height="4" transform="rotate(315 10 10)"/></g><circle cx="10" cy="10" r="4" fill="#0f7abd"/></svg>
<svg style="left:1221px;top:143px" width="21" height="21" viewBox="0 0 21 21"><circle cx="10.5" cy="10.5" r="10.5" fill="#fff"/><path d="M7 8A3.5 3.3 0 1 1 11.5 11.2C10.5 11.7 10.5 12 10.5 13" fill="none" stroke="#0f7abd" stroke-width="2.4"/><circle cx="10.5" cy="16.2" r="1.5" fill="#0f7abd"/></svg>
<svg style="left:1258px;top:144px" width="23" height="20" viewBox="0 0 23 20"><path d="M5 10A8.5 8.5 0 1 1 7.5 16" fill="none" stroke="#fff" stroke-width="2.1"/><path d="M0.5 8.5L5 14L9.5 8.5Z" fill="#fff"/><path d="M13.5 5.5V10.5L16.5 13.5" fill="none" stroke="#fff" stroke-width="1.8"/></svg>
<div class="a" style="left:169px;top:233px;width:1097px;height:11px;background:#f6f6f6"></div>
<div class="a" style="left:133px;top:233px;width:1170px;height:9px;background:linear-gradient(rgba(0,0,0,.16),rgba(0,0,0,.05) 50%,rgba(0,0,0,0))"></div>
<div class="a" style="left:133px;top:179px;width:1170px;height:54px;background:#fff"></div>
<svg style="left:146px;top:196px" width="12" height="20" viewBox="0 0 12 20"><path d="M10 1.5L2.5 10L10 18.5" fill="none" stroke="#1a7cc2" stroke-width="2.2"/></svg>
<div class="t" style="left:176px;top:197px;font-size:19.9px;color:#666">Liste des exemplaires reçus</div>
<div class="a" style="left:907px;top:189px;width:93px;height:34px;border:1px solid #ccc;border-radius:4px;background:#fff"></div>
<div class="t" style="left:920px;top:200px;font-size:13.9px;color:#444">Enregistrer</div>
<div class="a" style="left:1010px;top:189px;width:1px;height:34px;background:#e5e5e5"></div>
<div class="a" style="left:1025px;top:189px;width:66px;height:34px;border:1px solid #ccc;border-radius:4px;background:#eee"></div>
<div class="t" style="left:1038px;top:200px;font-size:13.9px;color:#444">Retour</div>
<div class="a" style="left:1101px;top:189px;width:191px;height:33px;border-radius:4px;background:#0f7abd"></div>
<div class="t" style="left:1115px;top:200px;font-size:13.9px;color:#fff">Enregistrer et réceptionner</div>
<div class="a" style="left:170px;top:250px;width:1095px;height:70px;background:#0f7abd;border-radius:4px 4px 0 0"></div>
<div class="a" style="left:201px;top:278px;width:15px;height:15px;border-radius:3px;background:#f2f2f2;box-shadow:0 1px 1px rgba(0,0,0,.25)"></div>
<div class="t" style="left:228px;top:278px;font-size:14px;color:#fff;">Bibliothèque</div>
<div class="t" style="left:346px;top:278px;font-size:14px;color:#fff;">Localisation</div>
<div class="t" style="left:463px;top:268px;font-size:14px;color:#fff;">Loc.</div>
<div class="t" style="left:463px;top:288px;font-size:14px;color:#fff;">temp.</div>
<div class="t" style="left:510px;top:258px;font-size:14px;color:#fff;width:60px;text-align:center">Date</div>
<div class="t" style="left:510px;top:278px;font-size:14px;color:#fff;width:60px;text-align:center">de</div>
<div class="t" style="left:510px;top:298px;font-size:14px;color:#fff;width:60px;text-align:center">récept</div>
<div class="t" style="left:570px;top:278px;font-size:14px;color:#fff;">Modifi</div>
<div class="t" style="left:619px;top:278px;font-size:14px;color:#fff;">Cote</div>
<div class="t" style="left:736px;top:268px;font-size:14px;color:#fff;">Cote</div>
<div class="t" style="left:736px;top:288px;font-size:14px;color:#fff;">d’exemplaire</div>
<div class="t" style="left:853px;top:278px;font-size:14px;color:#fff;">Code-barres</div>
<div class="t" style="left:970px;top:278px;font-size:14px;color:#fff;">Description</div>
<div class="t" style="left:1106px;top:278px;font-size:14px;color:#fff;">Étape en cours</div>
<div class="a" style="left:170px;top:320px;width:1095px;height:52px;background:#f3f4f4"></div>
<div class="a" style="left:170px;top:320px;width:1px;height:52px;background:#eaebeb"></div>
<div class="a" style="left:192px;top:320px;width:1px;height:52px;background:#eaebeb"></div>
<div class="a" style="left:217px;top:320px;width:1px;height:52px;background:#eaebeb"></div>
<div class="a" style="left:335px;top:320px;width:1px;height:52px;background:#eaebeb"></div>
<div class="a" style="left:452px;top:320px;width:1px;height:52px;background:#eaebeb"></div>
<div class="a" style="left:510px;top:320px;width:1px;height:52px;background:#eaebeb"></div>
<div class="a" style="left:559px;top:320px;width:1px;height:52px;background:#eaebeb"></div>
<div class="a" style="left:608px;top:320px;width:1px;height:52px;background:#eaebeb"></div>
<div class="a" style="left:725px;top:320px;width:1px;height:52px;background:#eaebeb"></div>
<div class="a" style="left:842px;top:320px;width:1px;height:52px;background:#eaebeb"></div>
<div class="a" style="left:959px;top:320px;width:1px;height:52px;background:#eaebeb"></div>
<div class="a" style="left:1095px;top:320px;width:1px;height:52px;background:#eaebeb"></div>
<div class="a" style="left:1210px;top:320px;width:1px;height:52px;background:#eaebeb"></div>
<div class="a" style="left:1265px;top:320px;width:1px;height:52px;background:#eaebeb"></div>
<div class="t" style="left:177px;top:339px;font-size:14px;color:#414141">1</div>
<div class="a" style="left:200px;top:339px;width:15px;height:15px;border-radius:4px;border:1px solid #c6c6c6;background:#f8f8f8"></div>
<div class="t" style="left:225px;top:339px;font-size:14px;color:#414141;transform:scaleX(0.94);transform-origin:0 0">BU de Pau</div>
<div class="t" style="left:342px;top:329px;font-size:14px;color:#414141;transform:scaleX(0.98);transform-origin:0 0">Espace Détente</div>
<div class="t" style="left:342px;top:349px;font-size:14px;color:#414141;transform:scaleX(1.025);transform-origin:0 0">- Actualités</div>
<div class="t" style="left:459px;top:339px;font-size:14px;color:#414141">Non</div>
<div class="t" style="left:517px;top:339px;font-size:14px;color:#414141;transform:scaleX(0.96);transform-origin:0 0">05/...</div>
<div class="t" style="left:566px;top:339px;font-size:14px;color:#414141;transform:scaleX(0.96);transform-origin:0 0">05/...</div>
<div class="t" style="left:615px;top:339px;font-size:14px;color:#414141;transform:scaleX(0.88);transform-origin:0 0">PRESSE EQUI</div>
<div class="t" style="left:732px;top:339px;font-size:14px;color:#414141;transform:scaleX(0.965);transform-origin:0 0">ULP 638</div>
<div class="a" style="left:849px;top:330px;width:104px;height:32px;border:1px solid #cfcfcf;border-radius:3px;background:#fff"></div>
<div class="t" style="left:849px;top:339px;width:104px;text-align:center;font-size:14px;font-weight:bold;color:#444;transform:scaleX(1.03)">287763-142</div>
<div class="t" style="left:966px;top:339px;font-size:14px;color:#414141">(2020:mai 15)</div>
<div class="t" style="left:1102px;top:339px;font-size:14px;color:#414141">-</div>
<div class="a" style="left:1218px;top:332px;width:40px;height:28px;border:1px solid #d0d0d0;border-bottom:2px solid #c8c8c8;border-radius:4px;background:#eeeeee"></div>
<svg style="left:1231px;top:344px" width="14" height="4" viewBox="0 0 14 4"><circle cx="2" cy="2" r="1.7" fill="#444"/><circle cx="7" cy="2" r="1.7" fill="#444"/><circle cx="12" cy="2" r="1.7" fill="#444"/></svg>
<div class="a" style="left:170px;top:372px;width:1095px;height:52px;background:#fff"></div>
<div class="a" style="left:170px;top:372px;width:1px;height:52px;background:#eaebeb"></div>
<div class="a" style="left:192px;top:372px;width:1px;height:52px;background:#eaebeb"></div>
<div class="a" style="left:217px;top:372px;width:1px;height:52px;background:#eaebeb"></div>
<div class="a" style="left:335px;top:372px;width:1px;height:52px;background:#eaebeb"></div>
<div class="a" style="left:452px;top:372px;width:1px;height:52px;background:#eaebeb"></div>
<div class="a" style="left:510px;top:372px;width:1px;height:52px;background:#eaebeb"></div>
<div class="a" style="left:559px;top:372px;width:1px;height:52px;background:#eaebeb"></div>
<div class="a" style="left:608px;top:372px;width:1px;height:52px;background:#eaebeb"></div>
<div class="a" style="left:725px;top:372px;width:1px;height:52px;background:#eaebeb"></div>
<div class="a" style="left:842px;top:372px;width:1px;height:52px;background:#eaebeb"></div>
<div class="a" style="left:959px;top:372px;width:1px;height:52px;background:#eaebeb"></div>
<div class="a" style="left:1095px;top:372px;width:1px;height:52px;background:#eaebeb"></div>
<div class="a" style="left:1210px;top:372px;width:1px;height:52px;background:#eaebeb"></div>
<div class="a" style="left:1265px;top:372px;width:1px;height:52px;background:#eaebeb"></div>
<div class="t" style="left:177px;top:391px;font-size:14px;color:#414141">2</div>
<div class="a" style="left:200px;top:391px;width:15px;height:15px;border-radius:4px;border:1px solid #c6c6c6;background:#f8f8f8"></div>
<div class="t" style="left:225px;top:391px;font-size:14px;color:#414141;transform:scaleX(0.94);transform-origin:0 0">BU de Pau</div>
<div class="t" style="left:342px;top:381px;font-size:14px;color:#414141;transform:scaleX(0.98);transform-origin:0 0">Espace Détente</div>
<div class="t" style="left:342px;top:401px;font-size:14px;color:#414141;transform:scaleX(1.025);transform-origin:0 0">- Actualités</div>
<div class="t" style="left:459px;top:391px;font-size:14px;color:#414141">Non</div>
<div class="t" style="left:517px;top:391px;font-size:14px;color:#414141;transform:scaleX(0.96);transform-origin:0 0">05/...</div>
<div class="t" style="left:566px;top:391px;font-size:14px;color:#414141;transform:scaleX(0.96);transform-origin:0 0">05/...</div>
<div class="t" style="left:615px;top:391px;font-size:14px;color:#414141;transform:scaleX(0.88);transform-origin:0 0">PRESSE EQUI</div>
<div class="t" style="left:732px;top:391px;font-size:14px;color:#414141;transform:scaleX(0.965);transform-origin:0 0">ULP 638</div>
<div class="a" style="left:849px;top:382px;width:104px;height:32px;border:1px solid #cfcfcf;border-radius:3px;background:#fff"></div>
<div class="t" style="left:849px;top:391px;width:104px;text-align:center;font-size:14px;font-weight:bold;color:#444;transform:scaleX(1.03)">287763-142</div>
<div class="t" style="left:966px;top:391px;font-size:14px;color:#414141">(2020:mai 14)</div>
<div class="t" style="left:1102px;top:391px;font-size:14px;color:#414141">-</div>
<div class="a" style="left:1218px;top:384px;width:40px;height:28px;border:1px solid #d0d0d0;border-bottom:2px solid #c8c8c8;border-radius:4px;background:#eeeeee"></div>
<svg style="left:1231px;top:396px" width="14" height="4" viewBox="0 0 14 4"><circle cx="2" cy="2" r="1.7" fill="#444"/><circle cx="7" cy="2" r="1.7" fill="#444"/><circle cx="12" cy="2" r="1.7" fill="#444"/></svg>
<div class="a" style="left:170px;top:424px;width:1095px;height:52px;background:#f3f4f4"></div>
<div class="a" style="left:170px;top:424px;width:1px;height:52px;background:#eaebeb"></div>
<div class="a" style="left:192px;top:424px;width:1px;height:52px;background:#eaebeb"></div>
<div class="a" style="left:217px;top:424px;width:1px;height:52px;background:#eaebeb"></div>
<div class="a" style="left:335px;top:424px;width:1px;height:52px;background:#eaebeb"></div>
<div class="a" style="left:452px;top:424px;width:1px;height:52px;background:#eaebeb"></div>
<div class="a" style="left:510px;top:424px;width:1px;height:52px;background:#eaebeb"></div>
<div class="a" style="left:559px;top:424px;width:1px;height:52px;background:#eaebeb"></div>
<div class="a" style="left:608px;top:424px;width:1px;height:52px;background:#eaebeb"></div>
<div class="a" style="left:725px;top:424px;width:1px;height:52px;background:#eaebeb"></div>
<div class="a" style="left:842px;top:424px;width:1px;height:52px;background:#eaebeb"></div>
<div class="a" style="left:959px;top:424px;width:1px;height:52px;background:#eaebeb"></div>
<div class="a" style="left:1095px;top:424px;width:1px;height:52px;background:#eaebeb"></div>
<div class="a" style="left:1210px;top:424px;width:1px;height:52px;background:#eaebeb"></div>
<div class="a" style="left:1265px;top:424px;width:1px;height:52px;background:#eaebeb"></div>
<div class="t" style="left:177px;top:443px;font-size:14px;color:#414141">3</div>
<div class="a" style="left:200px;top:443px;width:15px;height:15px;border-radius:4px;border:1px solid #c6c6c6;background:#f8f8f8"></div>
<div class="t" style="left:225px;top:443px;font-size:14px;color:#414141;transform:scaleX(0.94);transform-origin:0 0">BU de Pau</div>
<div class="t" style="left:342px;top:433px;font-size:14px;color:#414141;transform:scaleX(0.98);transform-origin:0 0">Espace Détente</div>
<div class="t" style="left:342px;top:453px;font-size:14px;color:#414141;transform:scaleX(1.025);transform-origin:0 0">- Actualités</div>
<div class="t" style="left:459px;top:443px;font-size:14px;color:#414141">Non</div>
<div class="t" style="left:517px;top:443px;font-size:14px;color:#414141;transform:scaleX(0.96);transform-origin:0 0">05/...</div>
<div class="t" style="left:566px;top:443px;font-size:14px;color:#414141;transform:scaleX(0.96);transform-origin:0 0">05/...</div>
<div class="t" style="left:615px;top:443px;font-size:14px;color:#414141;transform:scaleX(0.88);transform-origin:0 0">PRESSE EQUI</div>
<div class="t" style="left:732px;top:443px;font-size:14px;color:#414141;transform:scaleX(0.965);transform-origin:0 0">ULP 638</div>
<div class="a" style="left:849px;top:434px;width:104px;height:32px;border:1px solid #cfcfcf;border-radius:3px;background:#fff"></div>
<div class="t" style="left:849px;top:443px;width:104px;text-align:center;font-size:14px;font-weight:bold;color:#444;transform:scaleX(1.03)">287763-142</div>
<div class="t" style="left:966px;top:443px;font-size:14px;color:#414141">(2020:mai 13)</div>
<div class="t" style="left:1102px;top:443px;font-size:14px;color:#414141">-</div>
<div class="a" style="left:1218px;top:436px;width:40px;height:28px;border:1px solid #d0d0d0;border-bottom:2px solid #c8c8c8;border-radius:4px;background:#eeeeee"></div>
<svg style="left:1231px;top:448px" width="14" height="4" viewBox="0 0 14 4"><circle cx="2" cy="2" r="1.7" fill="#444"/><circle cx="7" cy="2" r="1.7" fill="#444"/><circle cx="12" cy="2" r="1.7" fill="#444"/></svg>
<div class="a" style="left:170px;top:476px;width:1095px;height:52px;background:#eef5fd"></div>
<div class="a" style="left:170px;top:476px;width:1px;height:52px;background:#eaebeb"></div>
<div class="a" style="left:192px;top:476px;width:1px;height:52px;background:#eaebeb"></div>
<div class="a" style="left:217px;top:476px;width:1px;height:52px;background:#eaebeb"></div>
<div class="a" style="left:335px;top:476px;width:1px;height:52px;background:#eaebeb"></div>
<div class="a" style="left:452px;top:476px;width:1px;height:52px;background:#eaebeb"></div>
<div class="a" style="left:510px;top:476px;width:1px;height:52px;background:#eaebeb"></div>
<div class="a" style="left:559px;top:476px;width:1px;height:52px;background:#eaebeb"></div>
<div class="a" style="left:608px;top:476px;width:1px;height:52px;background:#eaebeb"></div>
<div class="a" style="left:725px;top:476px;width:1px;height:52px;background:#eaebeb"></div>
<div class="a" style="left:842px;top:476px;width:1px;height:52px;background:#eaebeb"></div>
<div class="a" style="left:959px;top:476px;width:1px;height:52px;background:#eaebeb"></div>
<div class="a" style="left:1095px;top:476px;width:1px;height:52px;background:#eaebeb"></div>
<div class="a" style="left:1210px;top:476px;width:1px;height:52px;background:#eaebeb"></div>
<div class="a" style="left:1265px;top:476px;width:1px;height:52px;background:#eaebeb"></div>
<div class="t" style="left:177px;top:495px;font-size:14px;color:#414141">4</div>
<div class="a" style="left:200px;top:495px;width:15px;height:15px;border-radius:4px;border:1px solid #c6c6c6;background:#f8f8f8"></div>
<div class="t" style="left:225px;top:495px;font-size:14px;color:#414141;transform:scaleX(0.94);transform-origin:0 0">BU de Pau</div>
<div class="t" style="left:342px;top:485px;font-size:14px;color:#414141;transform:scaleX(0.98);transform-origin:0 0">Espace Détente</div>
<div class="t" style="left:342px;top:505px;font-size:14px;color:#414141;transform:scaleX(1.025);transform-origin:0 0">- Actualités</div>
<div class="t" style="left:459px;top:495px;font-size:14px;color:#414141">Non</div>
<div class="t" style="left:517px;top:495px;font-size:14px;color:#414141;transform:scaleX(0.96);transform-origin:0 0">05/...</div>
<div class="t" style="left:566px;top:495px;font-size:14px;color:#414141;transform:scaleX(0.96);transform-origin:0 0">05/...</div>
<div class="t" style="left:615px;top:495px;font-size:14px;color:#414141;transform:scaleX(0.88);transform-origin:0 0">PRESSE EQUI</div>
<div class="t" style="left:732px;top:495px;font-size:14px;color:#414141;transform:scaleX(0.965);transform-origin:0 0">ULP 638</div>
<div class="a" style="left:849px;top:486px;width:104px;height:32px;border:1px solid #cfcfcf;border-radius:3px;background:#fff"></div>
<div class="t" style="left:849px;top:495px;width:104px;text-align:center;font-size:14px;font-weight:bold;color:#444;transform:scaleX(1.03)">287763-142</div>
<div class="t" style="left:966px;top:495px;font-size:14px;color:#414141">(2020:mai 12)</div>
<div class="t" style="left:1102px;top:495px;font-size:14px;color:#414141">-</div>
<div class="a" style="left:1218px;top:488px;width:40px;height:28px;border:1px solid #d0d0d0;border-bottom:2px solid #c8c8c8;border-radius:4px;background:#eeeeee"></div>
<svg style="left:1231px;top:500px" width="14" height="4" viewBox="0 0 14 4"><circle cx="2" cy="2" r="1.7" fill="#444"/><circle cx="7" cy="2" r="1.7" fill="#444"/><circle cx="12" cy="2" r="1.7" fill="#444"/></svg>
<div class="a" style="left:170px;top:528px;width:1095px;height:52px;background:#f3f4f4"></div>
<div class="a" style="left:170px;top:528px;width:1px;height:52px;background:#eaebeb"></div>
<div class="a" style="left:192px;top:528px;width:1px;height:52px;background:#eaebeb"></div>
<div class="a" style="left:217px;top:528px;width:1px;height:52px;background:#eaebeb"></div>
<div class="a" style="left:335px;top:528px;width:1px;height:52px;background:#eaebeb"></div>
<div class="a" style="left:452px;top:528px;width:1px;height:52px;background:#eaebeb"></div>
<div class="a" style="left:510px;top:528px;width:1px;height:52px;background:#eaebeb"></div>
<div class="a" style="left:559px;top:528px;width:1px;height:52px;background:#eaebeb"></div>
<div class="a" style="left:608px;top:528px;width:1px;height:52px;background:#eaebeb"></div>
<div class="a" style="left:725px;top:528px;width:1px;height:52px;background:#eaebeb"></div>
<div class="a" style="left:842px;top:528px;width:1px;height:52px;background:#eaebeb"></div>
<div class="a" style="left:959px;top:528px;width:1px;height:52px;background:#eaebeb"></div>
<div class="a" style="left:1095px;top:528px;width:1px;height:52px;background:#eaebeb"></div>
<div class="a" style="left:1210px;top:528px;width:1px;height:52px;background:#eaebeb"></div>
<div class="a" style="left:1265px;top:528px;width:1px;height:52px;background:#eaebeb"></div>
<div class="t" style="left:177px;top:547px;font-size:14px;color:#414141">5</div>
<div class="a" style="left:200px;top:547px;width:15px;height:15px;border-radius:4px;border:1px solid #c6c6c6;background:#f8f8f8"></div>
<div class="t" style="left:225px;top:547px;font-size:14px;color:#414141;transform:scaleX(0.94);transform-origin:0 0">BU de Pau</div>
<div class="t" style="left:342px;top:537px;font-size:14px;color:#414141;transform:scaleX(0.98);transform-origin:0 0">Espace Détente</div>
<div class="t" style="left:342px;top:557px;font-size:14px;color:#414141;transform:scaleX(1.025);transform-origin:0 0">- Actualités</div>
<div class="t" style="left:459px;top:547px;font-size:14px;color:#414141">Non</div>
<div class="t" style="left:517px;top:547px;font-size:14px;color:#414141;transform:scaleX(0.96);transform-origin:0 0">03/...</div>
<div class="t" style="left:566px;top:547px;font-size:14px;color:#414141;transform:scaleX(0.96);transform-origin:0 0">03/...</div>
<div class="t" style="left:615px;top:547px;font-size:14px;color:#414141;transform:scaleX(0.88);transform-origin:0 0">PRESSE EQUI</div>
<div class="t" style="left:732px;top:547px;font-size:14px;color:#414141;transform:scaleX(0.965);transform-origin:0 0">ULP 638</div>
<div class="a" style="left:849px;top:538px;width:104px;height:32px;border:1px solid #cfcfcf;border-radius:3px;background:#fff"></div>
<div class="t" style="left:849px;top:547px;width:104px;text-align:center;font-size:14px;font-weight:bold;color:#444;transform:scaleX(1.03)">287763-142</div>
<div class="t" style="left:966px;top:547px;font-size:14px;color:#414141">(2020:mai 11)</div>
<div class="t" style="left:1102px;top:547px;font-size:14px;color:#414141">-</div>
<div class="a" style="left:1218px;top:540px;width:40px;height:28px;border:1px solid #d0d0d0;border-bottom:2px solid #c8c8c8;border-radius:4px;background:#eeeeee"></div>
<svg style="left:1231px;top:552px" width="14" height="4" viewBox="0 0 14 4"><circle cx="2" cy="2" r="1.7" fill="#444"/><circle cx="7" cy="2" r="1.7" fill="#444"/><circle cx="12" cy="2" r="1.7" fill="#444"/></svg>
<div class="a" style="left:170px;top:580px;width:1095px;height:52px;background:#fff"></div>
<div class="a" style="left:170px;top:580px;width:1px;height:52px;background:#eaebeb"></div>
<div class="a" style="left:192px;top:580px;width:1px;height:52px;background:#eaebeb"></div>
<div class="a" style="left:217px;top:580px;width:1px;height:52px;background:#eaebeb"></div>
<div class="a" style="left:335px;top:580px;width:1px;height:52px;background:#eaebeb"></div>
<div class="a" style="left:452px;top:580px;width:1px;height:52px;background:#eaebeb"></div>
<div class="a" style="left:510px;top:580px;width:1px;height:52px;background:#eaebeb"></div>
<div class="a" style="left:559px;top:580px;width:1px;height:52px;background:#eaebeb"></div>
<div class="a" style="left:608px;top:580px;width:1px;height:52px;background:#eaebeb"></div>
<div class="a" style="left:725px;top:580px;width:1px;height:52px;background:#eaebeb"></div>
<div class="a" style="left:842px;top:580px;width:1px;height:52px;background:#eaebeb"></div>
<div class="a" style="left:959px;top:580px;width:1px;height:52px;background:#eaebeb"></div>
<div class="a" style="left:1095px;top:580px;width:1px;height:52px;background:#eaebeb"></div>
<div class="a" style="left:1210px;top:580px;width:1px;height:52px;background:#eaebeb"></div>
<div class="a" style="left:1265px;top:580px;width:1px;height:52px;background:#eaebeb"></div>
<div class="t" style="left:177px;top:599px;font-size:14px;color:#414141">6</div>
<div class="a" style="left:200px;top:599px;width:15px;height:15px;border-radius:4px;border:1px solid #c6c6c6;background:#f8f8f8"></div>
<div class="t" style="left:225px;top:599px;font-size:14px;color:#414141;transform:scaleX(0.94);transform-origin:0 0">BU de Pau</div>
<div class="t" style="left:342px;top:589px;font-size:14px;color:#414141;transform:scaleX(0.98);transform-origin:0 0">Espace Détente</div>
<div class="t" style="left:342px;top:609px;font-size:14px;color:#414141;transform:scaleX(1.025);transform-origin:0 0">- Actualités</div>
<div class="t" style="left:459px;top:599px;font-size:14px;color:#414141">Non</div>
<div class="t" style="left:517px;top:599px;font-size:14px;color:#414141;transform:scaleX(0.96);transform-origin:0 0">03/...</div>
<div class="t" style="left:566px;top:599px;font-size:14px;color:#414141;transform:scaleX(0.96);transform-origin:0 0">03/...</div>
<div class="t" style="left:615px;top:599px;font-size:14px;color:#414141;transform:scaleX(0.88);transform-origin:0 0">PRESSE EQUI</div>
<div class="t" style="left:732px;top:599px;font-size:14px;color:#414141;transform:scaleX(0.965);transform-origin:0 0">ULP 638</div>
<div class="a" style="left:849px;top:590px;width:104px;height:32px;border:1px solid #cfcfcf;border-radius:3px;background:#fff"></div>
<div class="t" style="left:849px;top:599px;width:104px;text-align:center;font-size:14px;font-weight:bold;color:#444;transform:scaleX(1.03)">287763-142</div>
<div class="t" style="left:966px;top:599px;font-size:14px;color:#414141">(2020:mai 09)</div>
<div class="t" style="left:1102px;top:599px;font-size:14px;color:#414141">-</div>
<div class="a" style="left:1218px;top:592px;width:40px;height:28px;border:1px solid #d0d0d0;border-bottom:2px solid #c8c8c8;border-radius:4px;background:#eeeeee"></div>
<svg style="left:1231px;top:604px" width="14" height="4" viewBox="0 0 14 4"><circle cx="2" cy="2" r="1.7" fill="#444"/><circle cx="7" cy="2" r="1.7" fill="#444"/><circle cx="12" cy="2" r="1.7" fill="#444"/></svg>
<div class="a" style="left:170px;top:632px;width:1095px;height:52px;background:#f3f4f4"></div>
<div class="a" style="left:170px;top:632px;width:1px;height:52px;background:#eaebeb"></div>
<div class="a" style="left:192px;top:632px;width:1px;height:52px;background:#eaebeb"></div>
<div class="a" style="left:217px;top:632px;width:1px;height:52px;background:#eaebeb"></div>
<div class="a" style="left:335px;top:632px;width:1px;height:52px;background:#eaebeb"></div>
<div class="a" style="left:452px;top:632px;width:1px;height:52px;background:#eaebeb"></div>
<div class="a" style="left:510px;top:632px;width:1px;height:52px;background:#eaebeb"></div>
<div class="a" style="left:559px;top:632px;width:1px;height:52px;background:#eaebeb"></div>
<div class="a" style="left:608px;top:632px;width:1px;height:52px;background:#eaebeb"></div>
<div class="a" style="left:725px;top:632px;width:1px;height:52px;background:#eaebeb"></div>
<div class="a" style="left:842px;top:632px;width:1px;height:52px;background:#eaebeb"></div>
<div class="a" style="left:959px;top:632px;width:1px;height:52px;background:#eaebeb"></div>
<div class="a" style="left:1095px;top:632px;width:1px;height:52px;background:#eaebeb"></div>
<div class="a" style="left:1210px;top:632px;width:1px;height:52px;background:#eaebeb"></div>
<div class="a" style="left:1265px;top:632px;width:1px;height:52px;background:#eaebeb"></div>
<div class="t" style="left:177px;top:651px;font-size:14px;color:#414141">7</div>
<div class="a" style="left:200px;top:651px;width:15px;height:15px;border-radius:4px;border:1px solid #c6c6c6;background:#f8f8f8"></div>
<div class="t" style="left:225px;top:651px;font-size:14px;color:#414141;transform:scaleX(0.94);transform-origin:0 0">BU de Pau</div>
<div class="t" style="left:342px;top:641px;font-size:14px;color:#414141;transform:scaleX(0.98);transform-origin:0 0">Espace Détente</div>
<div class="t" style="left:342px;top:661px;font-size:14px;color:#414141;transform:scaleX(1.025);transform-origin:0 0">- Actualités</div>
<div class="t" style="left:459px;top:651px;font-size:14px;color:#414141">Non</div>
<div class="t" style="left:517px;top:651px;font-size:14px;color:#414141;transform:scaleX(0.96);transform-origin:0 0">03/...</div>
<div class="t" style="left:566px;top:651px;font-size:14px;color:#414141;transform:scaleX(0.96);transform-origin:0 0">03/...</div>
<div class="t" style="left:615px;top:651px;font-size:14px;color:#414141;transform:scaleX(0.88);transform-origin:0 0">PRESSE EQUI</div>
<div class="t" style="left:732px;top:651px;font-size:14px;color:#414141;transform:scaleX(0.965);transform-origin:0 0">ULP 638</div>
<div class="a" style="left:849px;top:642px;width:104px;height:32px;border:1px solid #cfcfcf;border-radius:3px;background:#fff"></div>
<div class="t" style="left:849px;top:651px;width:104px;text-align:center;font-size:14px;font-weight:bold;color:#444;transform:scaleX(1.03)">287763-142</div>
<div class="t" style="left:966px;top:651px;font-size:14px;color:#414141">(2020:mai 08)</div>
<div class="t" style="left:1102px;top:651px;font-size:14px;color:#414141">-</div>
<div class="a" style="left:1218px;top:644px;width:40px;height:28px;border:1px solid #d0d0d0;border-bottom:2px solid #c8c8c8;border-radius:4px;background:#eeeeee"></div>
<svg style="left:1231px;top:656px" width="14" height="4" viewBox="0 0 14 4"><circle cx="2" cy="2" r="1.7" fill="#444"/><circle cx="7" cy="2" r="1.7" fill="#444"/><circle cx="12" cy="2" r="1.7" fill="#444"/></svg>
<div class="a" style="left:170px;top:684px;width:1095px;height:52px;background:#fff"></div>
<div class="a" style="left:170px;top:684px;width:1px;height:52px;background:#eaebeb"></div>
<div class="a" style="left:192px;top:684px;width:1px;height:52px;background:#eaebeb"></div>
<div class="a" style="left:217px;top:684px;width:1px;height:52px;background:#eaebeb"></div>
<div class="a" style="left:335px;top:684px;width:1px;height:52px;background:#eaebeb"></div>
<div class="a" style="left:452px;top:684px;width:1px;height:52px;background:#eaebeb"></div>
<div class="a" style="left:510px;top:684px;width:1px;height:52px;background:#eaebeb"></div>
<div class="a" style="left:559px;top:684px;width:1px;height:52px;background:#eaebeb"></div>
<div class="a" style="left:608px;top:684px;width:1px;height:52px;background:#eaebeb"></div>
<div class="a" style="left:725px;top:684px;width:1px;height:52px;background:#eaebeb"></div>
<div class="a" style="left:842px;top:684px;width:1px;height:52px;background:#eaebeb"></div>
<div class="a" style="left:959px;top:684px;width:1px;height:52px;background:#eaebeb"></div>
<div class="a" style="left:1095px;top:684px;width:1px;height:52px;background:#eaebeb"></div>
<div class="a" style="left:1210px;top:684px;width:1px;height:52px;background:#eaebeb"></div>
<div class="a" style="left:1265px;top:684px;width:1px;height:52px;background:#eaebeb"></div>
<div class="t" style="left:177px;top:703px;font-size:14px;color:#414141">8</div>
<div class="a" style="left:200px;top:703px;width:15px;height:15px;border-radius:4px;border:1px solid #c6c6c6;background:#f8f8f8"></div>
<div class="t" style="left:225px;top:703px;font-size:14px;color:#414141;transform:scaleX(0.94);transform-origin:0 0">BU de Pau</div>
<div class="t" style="left:342px;top:693px;font-size:14px;color:#414141;transform:scaleX(0.98);transform-origin:0 0">Espace Détente</div>
<div class="t" style="left:342px;top:713px;font-size:14px;color:#414141;transform:scaleX(1.025);transform-origin:0 0">- Actualités</div>
<div class="t" style="left:459px;top:703px;font-size:14px;color:#414141">Non</div>
<div class="t" style="left:517px;top:703px;font-size:14px;color:#414141;transform:scaleX(0.96);transform-origin:0 0">03/...</div>
<div class="t" style="left:566px;top:703px;font-size:14px;color:#414141;transform:scaleX(0.96);transform-origin:0 0">03/...</div>
<div class="t" style="left:615px;top:703px;font-size:14px;color:#414141;transform:scaleX(0.88);transform-origin:0 0">PRESSE EQUI</div>
<div class="t" style="left:732px;top:703px;font-size:14px;color:#414141;transform:scaleX(0.965);transform-origin:0 0">ULP 638</div>
<div class="a" style="left:849px;top:694px;width:104px;height:32px;border:1px solid #cfcfcf;border-radius:3px;background:#fff"></div>
<div class="t" style="left:849px;top:703px;width:104px;text-align:center;font-size:14px;font-weight:bold;color:#444;transform:scaleX(1.03)">287763-142</div>
<div class="t" style="left:966px;top:703px;font-size:14px;color:#414141">(2020:mai 07)</div>
<div class="t" style="left:1102px;top:703px;font-size:14px;color:#414141">-</div>
<div class="a" style="left:1218px;top:696px;width:40px;height:28px;border:1px solid #d0d0d0;border-bottom:2px solid #c8c8c8;border-radius:4px;background:#eeeeee"></div>
<svg style="left:1231px;top:708px" width="14" height="4" viewBox="0 0 14 4"><circle cx="2" cy="2" r="1.7" fill="#444"/><circle cx="7" cy="2" r="1.7" fill="#444"/><circle cx="12" cy="2" r="1.7" fill="#444"/></svg>
<div class="a" style="left:932px;top:518px;width:91px;height:21px;border:1px solid #767676;background:#fff"></div>
<div class="t" style="left:938px;top:523px;font-size:11.5px;color:#000">287763-142400</div>
<div class="a" style="left:660px;top:666px;width:144px;height:34px;border-radius:4px;background:#fff;box-shadow:0 2px 10px rgba(0,0,0,.3);overflow:hidden"><div class="a" style="left:0;top:0;width:32px;height:34px;background:#f0f0f0"></div><div class="a" style="left:32px;top:0;width:1px;height:34px;background:#e0e0e0"></div><div class="a" style="left:111px;top:0;width:1px;height:34px;background:#e0e0e0"></div></div>
<svg style="left:672px;top:676px" width="9" height="14" viewBox="0 0 9 14"><path d="M7.5 1L2 7L7.5 13" fill="none" stroke="#d0d0d0" stroke-width="1.8"/></svg>
<div class="t" style="left:713px;top:675px;font-size:14px;color:#555">1 de 2</div>
<svg style="left:783px;top:676px" width="9" height="14" viewBox="0 0 9 14"><path d="M1.5 1L7 7L1.5 13" fill="none" stroke="#1a6fb0" stroke-width="2"/></svg>
<div class="a" style="left:1236px;top:656px;width:46px;height:46px;border-radius:50%;background:#0f7abd;box-shadow:0 2px 6px rgba(0,0,0,.35)"></div>
<svg style="left:1252px;top:674px" width="14" height="9" viewBox="0 0 14 9"><path d="M1.5 7.5L7 2L12.5 7.5" fill="none" stroke="#fff" stroke-width="3"/></svg>
<div class="a" style="left:1303px;top:127px;width:16px;height:594px;background:#f0f0f0"></div>
<div class="a" style="left:1303px;top:212px;width:15px;height:90px;background:#cdcdcd"></div>
<svg style="left:1306px;top:132px" width="10" height="7" viewBox="0 0 10 7"><path d="M1 6L5 2L9 6" fill="none" stroke="#505050" stroke-width="1.8"/></svg>
<svg style="left:1306px;top:710px" width="10" height="7" viewBox="0 0 10 7"><path d="M1 1L5 5L9 1" fill="none" stroke="#505050" stroke-width="1.8"/></svg>
</div></div>
</body></html>
